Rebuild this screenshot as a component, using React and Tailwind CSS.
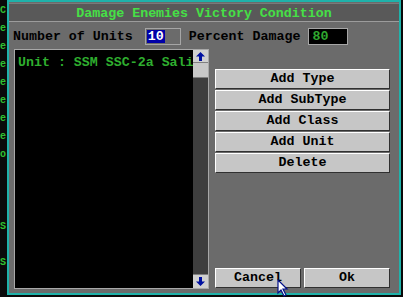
import React from "react";

const mono = { fontFamily: '"Liberation Mono", "DejaVu Sans Mono", monospace' };

const SideButton = ({ label }) => (
  <button className="h-[20px] w-full bg-[#c6c6c6] border border-t-white border-l-white border-b-[#303030] border-r-[#303030] text-[13.3px] font-bold text-black leading-none flex items-center justify-center">
    {label}
  </button>
);

const Arrow = ({ down }) => (
  <svg width="9" height="9" viewBox="0 0 9 9" className={down ? "rotate-180" : ""}>
    <path d="M4.5 0 L9 4.5 L6 4.5 L6 9 L3 9 L3 4.5 L0 4.5 Z" fill="#0010a0" />
  </svg>
);

const Cursor = () => (
  <svg width="12" height="18" viewBox="0 0 12 18" className="absolute left-[277px] top-[279px]">
    <path d="M1 1 L1 14 L4 11 L7 17 L9 16 L6 10 L10 10 Z" fill="white" stroke="#00108a" strokeWidth="1.2" />
  </svg>
);

export default function App() {
  const sideLetters = ["C", "e", "e", "e", "e", "e", "e", "e", "o", "", "", "", "S", "", "S"];

  return (
    <div className="relative w-[403px] h-[297px] bg-[#0a0a0a] flex overflow-hidden" style={mono}>
      <div className="w-[7px] flex flex-col pt-[6px] gap-[8px] text-[#30c030] text-[10px] font-bold leading-none overflow-hidden">
        {sideLetters.map((l, i) => (
          <span key={i} className="h-[10px]">{l}</span>
        ))}
      </div>

      <div className="w-[394px] h-[295px] border-2 border-[#1fb2aa] bg-[#6b6b6b] flex flex-col">
        <div className="h-[19px] mt-[1px] bg-[#595959] border-t border-[#7a7a7a] border-b border-b-[#9c9c9c] flex items-end justify-center pb-[1px] text-[#46e046] text-[13.3px] font-bold leading-none">
          Damage Enemies Victory Condition
        </div>

        <div className="flex items-center h-[17px] mt-[6px] pl-[4px] text-[13.3px] font-bold text-black leading-none">
          <span>Number of Units</span>
          <div className="ml-[12px] w-[36px] h-[17px] border border-[#a6a6a6] flex items-center">
            <span className="bg-[#0000a8] text-white h-[13px] px-[1px] flex items-center ml-[1px]">10</span>
          </div>
          <span className="ml-[8px]">Percent Damage</span>
          <div className="ml-[8px] w-[40px] h-[17px] border border-[#a6a6a6] bg-black text-[#2fa82f] flex items-center pl-[3px]">
            80
          </div>
        </div>

        <div className="flex flex-1 mt-[4px] pl-[5px] pb-[4px]">
          <div className="w-[195px] border border-[#a8a8a8] flex">
            <div className="flex-1 bg-black text-[#2fae2f] text-[13.3px] font-bold leading-none pl-[3px] pt-[6px] overflow-hidden whitespace-nowrap">
              Unit : SSM SSC-2a Sali
            </div>
            <div className="w-[15px] bg-[#3e3e3e] flex flex-col">
              <div className="h-[13px] bg-[#d0d0d0] border-b border-[#808080] flex items-center justify-center">
                <Arrow />
              </div>
              <div className="h-[15px] bg-[#c8c8c8] border-b border-[#808080]" />
              <div className="flex-1" />
              <div className="h-[14px] bg-[#d0d0d0] border-t border-[#808080] flex items-center justify-center">
                <Arrow down />
              </div>
            </div>
          </div>

          <div className="flex-1 flex flex-col pl-[6px] pr-[9px] pt-[20px]">
            <div className="flex flex-col gap-[1px]">
              <SideButton label="Add Type" />
              <SideButton label="Add SubType" />
              <SideButton label="Add Class" />
              <SideButton label="Add Unit" />
              <SideButton label="Delete" />
            </div>
            <div className="flex-1" />
            <div className="flex gap-[3px] mb-[1px]">
              <div className="w-[86px]"><SideButton label="Cancel" /></div>
              <div className="flex-1"><SideButton label="Ok" /></div>
            </div>
          </div>
        </div>
      </div>

      <Cursor />
    </div>
  );
}
